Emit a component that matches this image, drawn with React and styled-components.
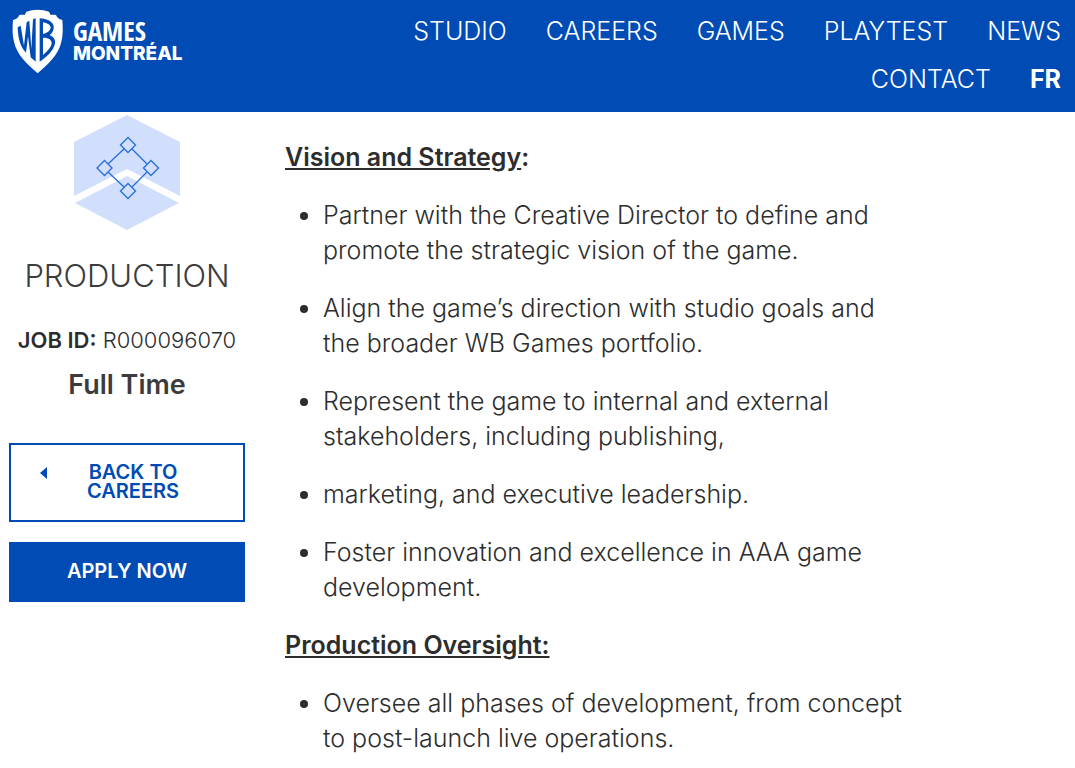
import React from 'react';
import styled, { createGlobalStyle } from 'styled-components';

const GlobalStyle = createGlobalStyle`
    body {
        margin: 0;
        background-color: #fff;
        color: #2d2d2d;
        font-family: Inter, "Open Sans", sans-serif;
        font-size: 25px;
        font-weight: 300;
        line-height: 35px;
    }
`;

const Header = styled.header`
    display: flex;
    justify-content: space-between;
    align-items: flex-start;
    gap: 40px;
    padding: 7px 14px 9px 12px;
    background-color: #004bb4;
`;

const LogoLink = styled.a`
    display: flex;
    align-items: flex-start;
    gap: 9px;
    padding-top: 2px;
    color: #fff;
    text-decoration: none;
`;

const LogoText = styled.span`
    display: flex;
    flex-direction: column;
    padding-top: 9px;
`;

const LogoGames = styled.span`
    font-family: "Open Sans Condensed", "Open Sans", sans-serif;
    font-size: 27px;
    font-weight: 700;
    line-height: 26px;
`;

const LogoCity = styled.span`
    font-size: 19px;
    font-weight: 800;
    line-height: 20px;
`;

const Nav = styled.nav`
    display: flex;
    flex: 0 1 66%;
    flex-wrap: wrap;
    justify-content: flex-end;
    column-gap: 39px;
`;

const NavLink = styled.a`
    color: #fff;
    font-size: 25px;
    font-weight: ${(props) => (props.$bold ? 700 : 300)};
    line-height: 48px;
    text-decoration: none;
`;

const Page = styled.div`
    display: grid;
    grid-template-columns: 236px minmax(0, 1fr);
    column-gap: 40px;
    padding: 0 16% 0 9px;
`;

const Sidebar = styled.aside`
    display: flex;
    flex-direction: column;
    align-items: center;
    padding-top: 2px;
    text-align: center;
`;

const Department = styled.h2`
    margin: 28px 0 30px;
    color: #3c3c3c;
    font-size: 31px;
    font-weight: 300;
`;

const JobId = styled.p`
    margin: 0 0 9px;
    font-size: 22px;

    strong {
        font-weight: 600;
    }
`;

const JobType = styled.p`
    margin: 0 0 41px;
    color: #3c3c3c;
    font-size: 27px;
    font-weight: 600;
`;

const Button = styled.button`
    display: flex;
    align-items: flex-start;
    box-sizing: border-box;
    width: 100%;
    margin: 0 0 20px;
    padding: 18px 28px 19px;
    border: 2px solid #004bb4;
    background-color: ${(props) => (props.$filled ? '#004bb4' : '#fff')};
    color: ${(props) => (props.$filled ? '#fff' : '#004bb4')};
    font-family: inherit;
    font-size: 20px;
    font-weight: 600;
    line-height: 19px;
    cursor: pointer;
`;

const ButtonLabel = styled.span`
    flex: 1;
    padding: ${(props) => (props.$wide ? '0 28px 0 32px' : '0')};
`;

const Content = styled.main`
    padding-top: 28px;
`;

const Heading = styled.h3`
    margin: 0 0 23px;
    font-size: 25px;
    font-weight: 600;
    line-height: 35px;
`;

const List = styled.ul`
    margin: 0;
    padding-left: 38px;
`;

const Item = styled.li`
    margin-bottom: 23px;
`;

const Shield = () => (
    <svg width="52" height="65" viewBox="36 26 154 195" aria-hidden="true">
        <path
            fill="#fff"
            d="M112 28C100 28 89 30 78 34L73 44C67 43 61 43 57 44C54 52 48 57 38 59C36 84 36 106 41 124C50 165 80 190 112 219C144 190 174 165 183 124C188 106 188 84 186 59C176 57 170 52 167 44C163 43 157 43 151 44L146 34C135 30 124 28 112 28Z"
        />
        <path
            fill="#004bb4"
            d="M52 81L61 76L71 136L79 66L87 61L93 146L98 57L106 54V184L91 171L83 108L77 157L68 146C57 128 53 108 52 81Z"
        />
        <path
            fill="#004bb4"
            fillRule="evenodd"
            d="M118 54C140 55 158 64 160 78C161 91 155 99 148 105C160 109 166 118 164 130C158 153 138 170 118 184ZM128 66V101C141 98 151 91 151 81C149 72 141 68 128 66ZM128 112V164C142 153 153 140 154 129C154 118 144 111 128 112Z"
        />
    </svg>
);

const ProductionIcon = () => (
    <svg width="108" height="116" viewBox="0 0 108 116" aria-hidden="true">
        <path fill="#d2dffc" d="M54 1L107 28V82L54 55L1 82V28Z" />
        <path fill="#d2dffc" d="M54 62L106 89L54 116L2 89Z" />
        <g fill="none" stroke="#2b71d8" strokeWidth="1.4" transform="translate(1 0)">
            <path d="M50 35L34 50M58 35L73 50M34 58L50 73M73 58L58 73" />
            <path d="M54 23.5L61.5 31L54 38.5L46.5 31Z" />
            <path d="M30.500 46.500L38 54L30.500 61.500L23 54Z" />
            <path d="M77 46.500L84.500 54L77 61.500L69.500 54Z" />
            <path d="M54 69.500L61.500 77L54 84.500L46.500 77Z" />
        </g>
    </svg>
);

const BackArrow = () => (
    <svg width="8" height="19" viewBox="0 0 8 19" aria-hidden="true">
        <path fill="#004bb4" d="M8 4V16L1 10Z" />
    </svg>
);

const navItems = ['Studio', 'Careers', 'Games', 'Playtest', 'News', 'Contact'];

const vision = [
    'Partner with the Creative Director to define and promote the strategic vision of the game.',
    'Align the game’s direction with studio goals and the broader WB Games portfolio.',
    'Represent the game to internal and external stakeholders, including publishing,',
    'marketing, and executive leadership.',
    'Foster innovation and excellence in AAA game development.',
];

const oversight = [
    'Oversee all phases of development, from concept to post-launch live operations.',
];

const App = () => {
    return (
        <>
            <GlobalStyle />
            <Header>
                <LogoLink href="#home">
                    <Shield />
                    <LogoText>
                        <LogoGames>GAMES</LogoGames>
                        <LogoCity>MONTRÉAL</LogoCity>
                    </LogoText>
                </LogoLink>
                <Nav>
                    {navItems.map((item) => (
                        <NavLink key={item} href={`#${item.toLowerCase()}`}>{item.toUpperCase()}</NavLink>
                    ))}
                    <NavLink href="#fr" $bold>FR</NavLink>
                </Nav>
            </Header>
            <Page>
                <Sidebar>
                    <ProductionIcon />
                    <Department>PRODUCTION</Department>
                    <JobId><strong>JOB ID:</strong> R000096070</JobId>
                    <JobType>Full Time</JobType>
                    <Button type="button">
                        <BackArrow />
                        <ButtonLabel $wide>BACK TO CAREERS</ButtonLabel>
                    </Button>
                    <Button type="button" $filled>
                        <ButtonLabel>APPLY NOW</ButtonLabel>
                    </Button>
                </Sidebar>
                <Content>
                    <Heading><u>Vision and Strategy</u>:</Heading>
                    <List>
                        {vision.map((text) => <Item key={text}>{text}</Item>)}
                    </List>
                    <Heading><u>Production Oversight:</u></Heading>
                    <List>
                        {oversight.map((text) => <Item key={text}>{text}</Item>)}
                    </List>
                </Content>
            </Page>
        </>
    );
};

export default App;
